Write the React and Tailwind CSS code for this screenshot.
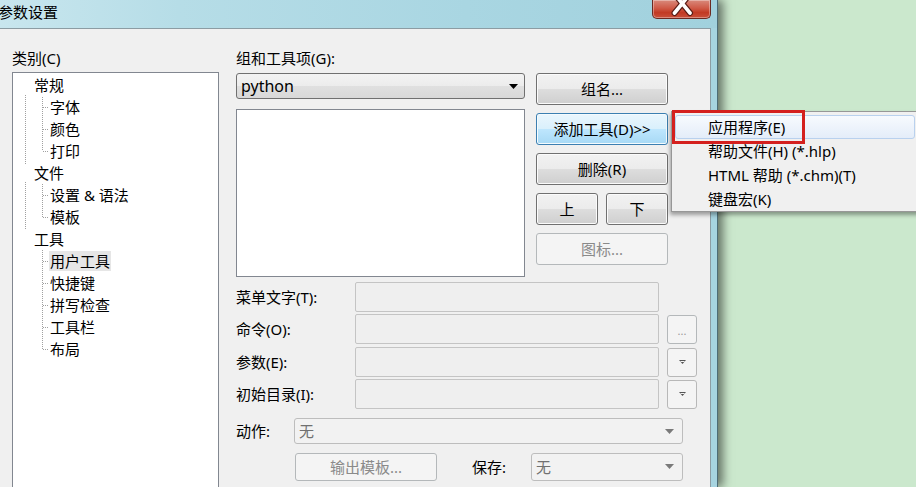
const btn =
  "flex items-center justify-center rounded-[3px] border border-[#707070] bg-[linear-gradient(#f2f2f2_0%,#ebebeb_50%,#dddddd_51%,#cfcfcf_100%)] shadow-[inset_0_0_0_1px_#fbfbfb] text-black";
const btnHot =
  "flex items-center justify-center rounded-[3px] border border-[#3c7fb1] bg-[linear-gradient(#eaf6fd_0%,#d9f0fc_50%,#bee6fd_51%,#a7d9f5_100%)] shadow-[inset_0_0_0_1px_#f4fbfe] text-black";
const btnOff =
  "flex items-center justify-center rounded-[3px] border border-[#b4b8ba] bg-[#f4f4f4] text-[#8a8a8a]";
const field = "h-full rounded-[2px] border border-[#c4c4c4] bg-[#efefef]";

const Arrow = ({ color = "#000" }) => (
  <svg width="9" height="5" viewBox="0 0 9 5">
    <path d="M0 0h9L4.5 5z" fill={color} />
  </svg>
);

const TinyArrow = () => (
  <svg width="7" height="5" viewBox="0 0 7 5">
    <path d="M0 0h7L3.5 4z" fill="#555" />
    <path d="M1.5 1.5h4" stroke="#f3f3f3" strokeWidth="1" />
  </svg>
);

const tree = [
  { t: "常规", root: true },
  { t: "字体" },
  { t: "颜色" },
  { t: "打印" },
  { t: "文件", root: true },
  { t: "设置 & 语法" },
  { t: "模板" },
  { t: "工具", root: true },
  { t: "用户工具", sel: true },
  { t: "快捷键" },
  { t: "拼写检查" },
  { t: "工具栏" },
  { t: "布局" },
];

const TreeLines = () => (
  <svg className="absolute left-0 top-0" width="60" height="300" viewBox="0 0 60 300">
    <g stroke="#a0a0a0" strokeWidth="1" strokeDasharray="1 1" fill="none">
      <path d="M12.5 22V92M12.5 109V157" />
      <path d="M29.5 24V78M29.5 111V144M29.5 177V276" />
      <path d="M30 34.5h6M30 56.5h6M30 78.5h6" />
      <path d="M30 122.5h6M30 144.5h6" />
      <path d="M30 188.5h6M30 210.5h6M30 232.5h6M30 254.5h6M30 276.5h6" />
    </g>
  </svg>
);

const FieldRow = ({ label, extra, className = "" }) => (
  <div className={"flex items-center h-[30px] " + className}>
    <div className="w-[119px]">{label}</div>
    <div className={field + " w-[304px]"} />
    {extra === "dots" && (
      <div className={btnOff + " ml-[8px] w-[30px] h-[29px] text-[#999] text-[11px] pt-[4px]"}>...</div>
    )}
    {extra === "arrow" && (
      <div className={btnOff + " ml-[8px] w-[30px] h-[29px] border-[#b8b8b8]"}>
        <TinyArrow />
      </div>
    )}
  </div>
);

export default function App() {
  return (
    <div className="relative w-[916px] h-[487px] overflow-hidden flex bg-[#cbe8cd] text-[15px] leading-[20px] text-black font-['Noto_Sans','Noto_Sans_CJK_SC',sans-serif]">
      {/* dialog window */}
      <div className="w-[718px] h-full shrink-0 flex flex-col bg-[#a6d4e0] border-r border-[#4d6c76] shadow-[5px_0_9px_rgba(0,0,0,0.5)]">
        <div className="h-[28px] shrink-0 flex items-start justify-between bg-[linear-gradient(90deg,#c8e6ee_0%,#b6dde7_25%,#a9d6e2_65%,#a1d1dd_100%)]">
          <div className="ml-[-2px] mt-[2px] leading-[20px]">参数设置</div>
          <div className="relative w-[59px] h-[19px] mr-[6px] overflow-hidden rounded-b-[5px] border border-t-0 border-[#6b2a22] bg-[linear-gradient(#d98a7c_0%,#cf5a47_45%,#c23a24_70%,#c9503a_100%)] shadow-[inset_0_0_0_1px_rgba(255,255,255,0.35)]">
            <svg className="absolute left-0 top-0" width="59" height="19" viewBox="0 0 59 19">
              <path d="M21.5 13L37 -6M37 13L21.5 -6" stroke="#5a1d16" strokeWidth="6" strokeLinecap="round" />
              <path d="M21.5 13L37 -6M37 13L21.5 -6" stroke="#fff" strokeWidth="3.6" strokeLinecap="round" />
            </svg>
          </div>
        </div>

        <div className="w-[711px] flex-1 min-h-0 overflow-hidden flex bg-[#f0f0f0] border-t border-r border-[#8c9ca3] pl-[12px] pt-[19px]">
          {/* category tree */}
          <div className="w-[207px] shrink-0 flex flex-col">
            <div className="h-[20px] shrink-0">类别(C)</div>
            <div className="relative shrink-0 mt-[4px] h-[430px] border border-[#828790] bg-white pt-[1px]">
              <TreeLines />
              {tree.map((r) => (
                <div key={r.t} className={"h-[22px] flex items-center " + (r.root ? "pl-[21px]" : "pl-[37px]")}>
                  <span className={r.sel ? "bg-[#e6e6e6] px-[1px] ml-[-1px] leading-[20px]" : "leading-[20px]"}>{r.t}</span>
                </div>
              ))}
            </div>
          </div>

          {/* tools section */}
          <div className="ml-[17px] w-[462px] flex flex-col">
            <div className="h-[20px] shrink-0">组和工具项(G):</div>
            <div className="flex shrink-0 mt-[5px]">
              <div className="w-[289px] flex flex-col">
                <div className="h-[26px] rounded-[3px] border border-[#707070] bg-[linear-gradient(#f3f3f3_0%,#ececec_50%,#e0e0e0_51%,#d8d8d8_100%)] flex items-center justify-between pl-[4px] pr-[6px] text-[16px]">
                  <span>python</span>
                  <Arrow />
                </div>
                <div className="mt-[10px] h-[168px] border border-[#828790] bg-white" />
              </div>
              <div className="ml-[11px] w-[132px] flex flex-col gap-[8px]">
                <div className={btn + " h-[32px]"}>组名...</div>
                <div className={btnHot + " h-[32px]"}>添加工具(D)&gt;&gt;</div>
                <div className={btn + " h-[32px]"}>删除(R)</div>
                <div className="flex justify-between">
                  <div className={btn + " h-[32px] w-[62px]"}>上</div>
                  <div className={btn + " h-[32px] w-[62px]"}>下</div>
                </div>
                <div className={btnOff + " h-[32px]"}>图标...</div>
              </div>
            </div>

            {/* form rows */}
            <div className="mt-[5px] shrink-0 flex flex-col">
              <FieldRow label="菜单文字(T):" />
              <FieldRow label="命令(O):" extra="dots" className="mt-[2px]" />
              <FieldRow label="参数(E):" extra="arrow" className="mt-[3px]" />
              <FieldRow label="初始目录(I):" extra="arrow" className="mt-[2px]" />

              <div className="mt-[9px] flex items-center h-[26px]">
                <div className="w-[58px]">动作:</div>
                <div className="w-[389px] h-full rounded-[3px] border border-[#bdbdbd] bg-[#f2f2f2] flex items-center justify-between pl-[4px] pr-[8px] text-[#707070]">
                  <span>无</span>
                  <Arrow color="#7a7a7a" />
                </div>
              </div>

              <div className="mt-[8px] flex items-center h-[29px]">
                <div className={btnOff + " ml-[59px] w-[142px] h-[28px] mt-[1px]"}>输出模板...</div>
                <div className="ml-[35px] w-[59px]">保存:</div>
                <div className="w-[152px] h-[28px] rounded-[3px] border border-[#bdbdbd] bg-[#f2f2f2] flex items-center justify-between pl-[4px] pr-[8px] text-[#707070]">
                  <span>无</span>
                  <Arrow color="#7a7a7a" />
                </div>
              </div>
            </div>
          </div>
        </div>
      </div>

      {/* popup menu */}
      <div className="absolute left-[671px] top-[111px] w-[260px] h-[101px] border border-[#979797] bg-[#f0f0f0] pt-[3px] pl-[3px] shadow-[-1px_3px_4px_rgba(0,0,0,0.35)]">
        <div className="h-[24px] w-[240px] flex items-center pl-[32px] rounded-[3px] border border-[#b9d1ee] bg-[linear-gradient(#f7fafe,#e4edf9)]">
          应用程序(E)
        </div>
        <div className="h-[24px] flex items-center pl-[33px]">帮助文件(H) (*.hlp)</div>
        <div className="h-[24px] flex items-center pl-[33px]">HTML 帮助 (*.chm)(T)</div>
        <div className="h-[24px] flex items-center pl-[33px]">键盘宏(K)</div>
      </div>

      {/* red annotation */}
      <div className="absolute left-[672px] top-[110px] w-[133px] h-[34px] border-[3px] border-[#d4201e]" />
    </div>
  );
}
